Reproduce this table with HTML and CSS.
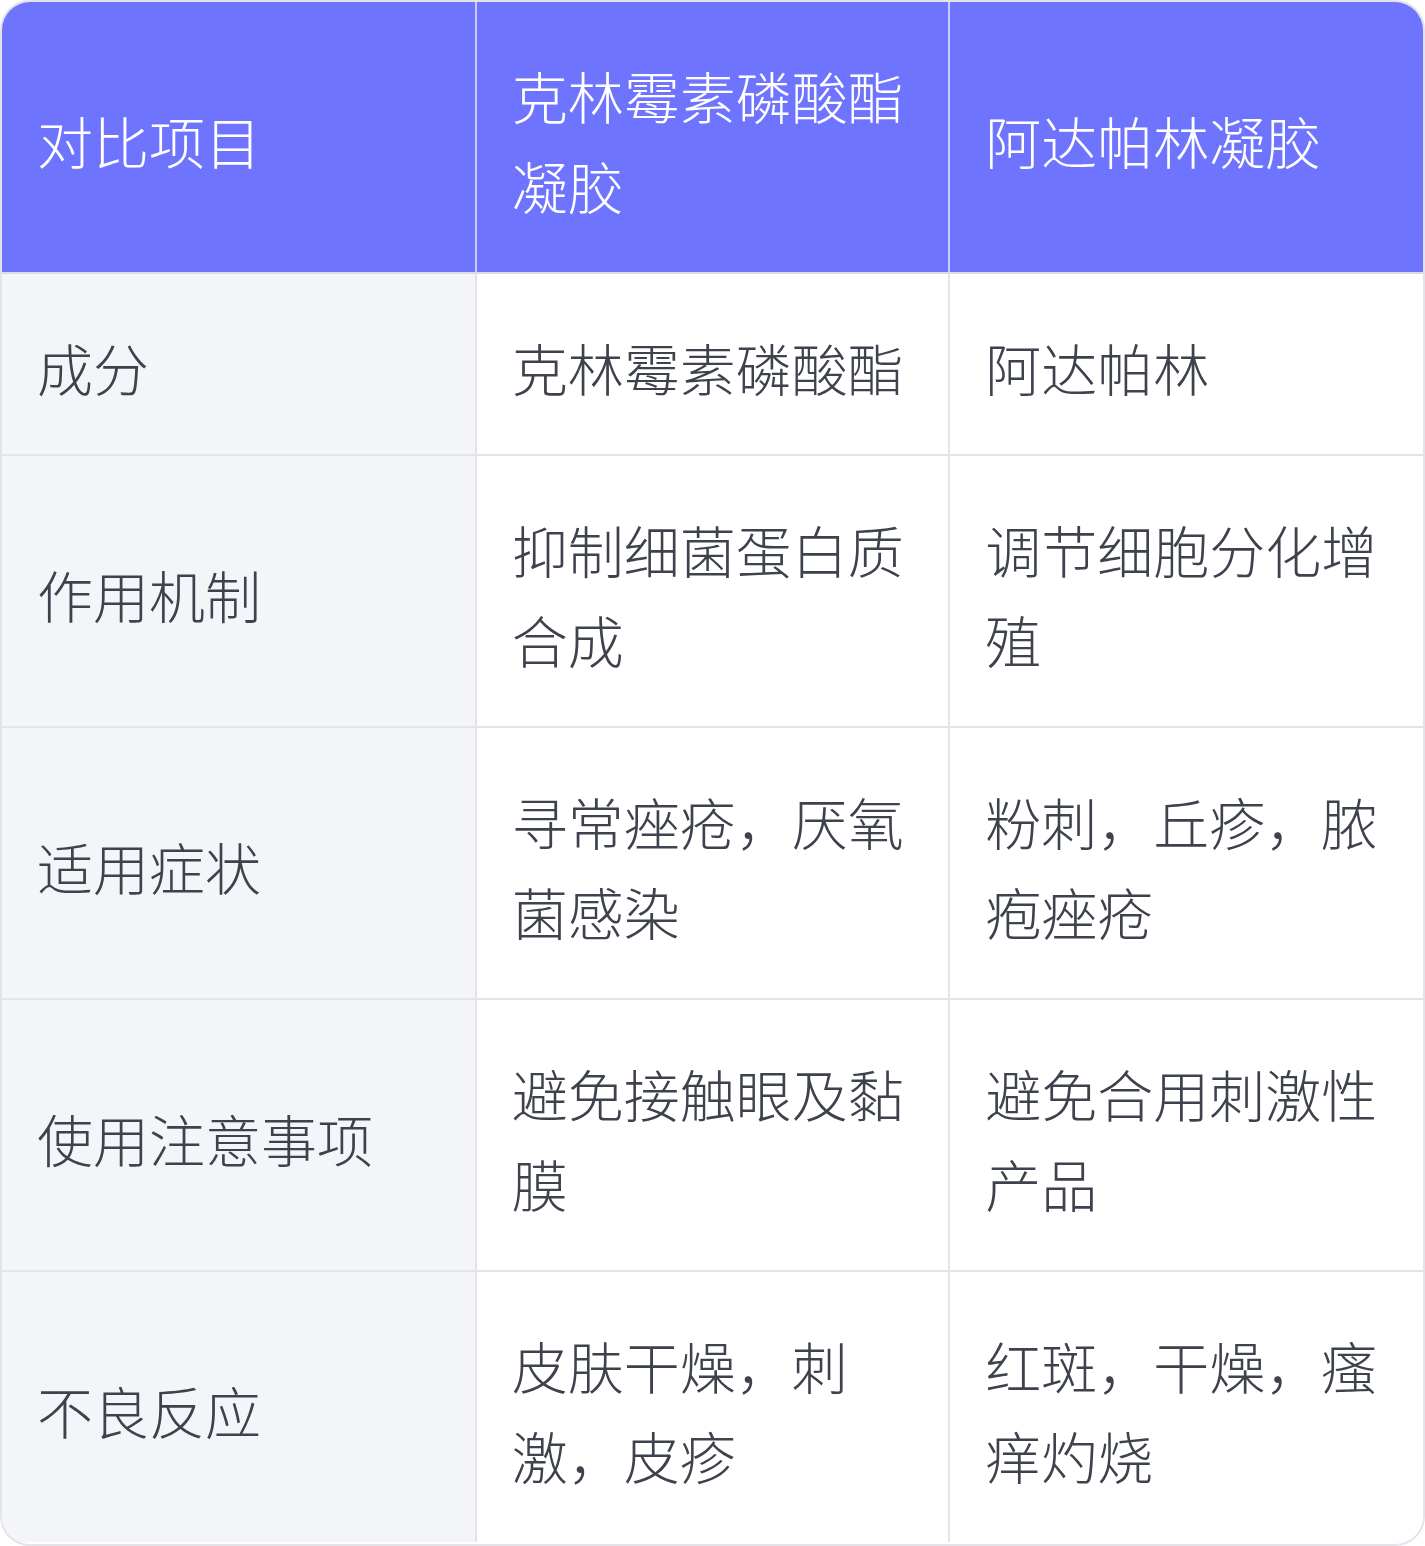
FILE: index.html
```html
<!DOCTYPE html>
<html lang="zh-CN">
<head>
<meta charset="utf-8">
<title>对比</title>
<link rel="stylesheet" href="styles.css">
</head>
<body>
<div class="wrap">
<table class="cmp">
<colgroup><col class="c"><col class="c"><col class="c"></colgroup>
<thead>
<tr><th>对比项目</th><th>克林霉素磷酸酯凝胶</th><th>阿达帕林凝胶</th></tr>
</thead>
<tbody>
<tr><td class="key">成分</td><td>克林霉素磷酸酯</td><td>阿达帕林</td></tr>
<tr><td class="key">作用机制</td><td>抑制细菌蛋白质合成</td><td>调节细胞分化增殖</td></tr>
<tr><td class="key">适用症状</td><td>寻常痤疮，厌氧菌感染</td><td>粉刺，丘疹，脓疱痤疮</td></tr>
<tr><td class="key">使用注意事项</td><td>避免接触眼及黏膜</td><td>避免合用刺激性产品</td></tr>
<tr><td class="key">不良反应</td><td>皮肤干燥，刺激，皮疹</td><td>红斑，干燥，瘙痒灼烧</td></tr>
</tbody>
</table>
</div>
</body>
</html>
```
FILE: styles.css
```css
html, body { margin: 0; padding: 0; background: #ffffff; }
.wrap {
  width: 1425px;
  height: 1546px;
  box-sizing: border-box;
  border: 2px solid #e3e4e9;
  border-radius: 30px;
  overflow: hidden;
}
.cmp {
  width: 100%;
  border-collapse: collapse;
  table-layout: fixed;
  font-family: "Noto Sans CJK SC", "Noto Sans", sans-serif;
  font-size: 56px;
  line-height: 90px;
  font-weight: 300;
}
.cmp th, .cmp td {
  padding: 48px 35px 42px 35px;
  text-align: left;
  vertical-align: middle;
  border: 2px solid #e3e4e9;
}
.cmp th {
  background: #6f74ff;
  color: #ffffff;
  font-weight: 300;
  border-top: none;
  border-left-color: #c9cbff;
  border-right-color: #c9cbff;
  border-bottom-color: #dcdde4;
}
.cmp td { color: #3e424d; background: #ffffff; }
.cmp td.key { background: #f4f5f9; }
.cmp tr > :first-child { border-left: none; }
.cmp tr > :last-child { border-right: none; }
.cmp tbody tr:last-child td { border-bottom: none; }
```
